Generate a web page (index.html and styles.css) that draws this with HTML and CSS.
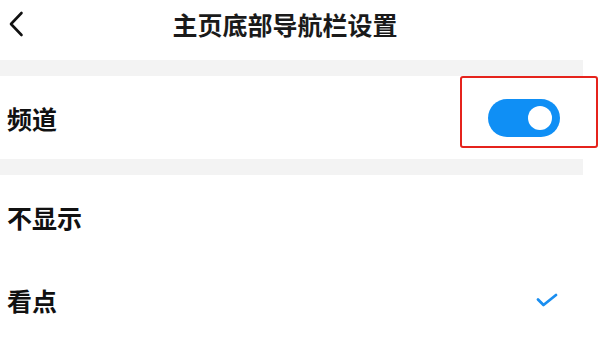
FILE: index.html
```html
<!DOCTYPE html>
<html lang="zh">
<head>
<meta charset="utf-8">
<link rel="stylesheet" href="styles.css">
</head>
<body>
<div class="page">
  <header class="topbar">
    <div class="back">
      <svg width="16" height="26" viewBox="0 0 16 26"><path d="M13.5 2 L3 13 L13.5 24" fill="none" stroke="#111" stroke-width="2.6" stroke-linecap="round" stroke-linejoin="round"/></svg>
    </div>
    <h1 class="title">主页底部导航栏设置</h1>
    <div class="spacer"></div>
  </header>
  <div class="gap"></div>
  <div class="row">
    <span class="label">频道</span>
    <span class="toggle"><span class="knob"></span></span>
  </div>
  <div class="gap"></div>
  <div class="row">
    <span class="label">不显示</span>
  </div>
  <div class="row">
    <span class="label">看点</span>
    <svg class="check" width="22" height="14" viewBox="0 0 22 14"><path d="M2 6.5 L7.5 12 L20 2" fill="none" stroke="#1a8ef0" stroke-width="2.8" stroke-linecap="round" stroke-linejoin="round"/></svg>
  </div>
  <div class="highlight"></div>
</div>
</body>
</html>
```
FILE: styles.css
```css
* { box-sizing: border-box; }
html, body {
  margin: 0;
  padding: 0;
  background: #ffffff;
}
body {
  font-family: "Noto Sans CJK SC", "Noto Sans", sans-serif;
  color: #111111;
}
.page {
  position: relative;
  width: 583px;
  background: #ffffff;
}
.topbar {
  display: flex;
  align-items: center;
  height: 60px;
  padding-bottom: 12px;
}
.back {
  width: 40px;
  padding-left: 8px;
  display: flex;
  align-items: center;
}
.back svg { display: block; }
.title {
  flex: 1;
  margin: 0;
  text-align: center;
  font-size: 25px;
  font-weight: 700;
  line-height: 30px;
  color: #1a1a1a;
}
.spacer { width: 53px; }
.gap {
  height: 16px;
  background: #f3f3f3;
}
.row {
  display: flex;
  align-items: center;
  justify-content: space-between;
  height: 83px;
  padding: 0 23px 0 7px;
}
.label {
  font-size: 25px;
  font-weight: 700;
  line-height: 30px;
  color: #111111;
}
.toggle {
  position: relative;
  width: 72px;
  height: 38px;
  border-radius: 19px;
  background: #0f8ff5;
}
.knob {
  position: absolute;
  right: 8px;
  top: 7px;
  width: 24px;
  height: 24px;
  border-radius: 50%;
  background: #ffffff;
}
.check {
  display: block;
  margin-right: 2px;
}
.highlight {
  position: absolute;
  left: 460px;
  top: 76px;
  width: 138px;
  height: 72px;
  border: 2.5px solid #e5231c;
  border-radius: 3px;
}
```
